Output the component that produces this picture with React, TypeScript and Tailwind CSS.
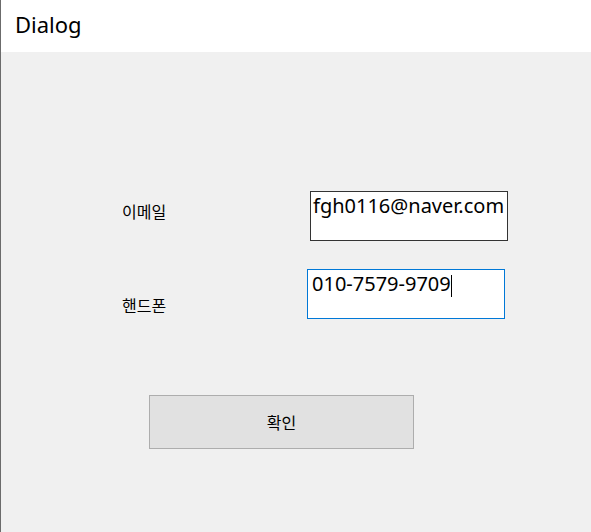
export default function App() {
  const latin = { fontFamily: '"Noto Sans", "Noto Sans CJK KR", sans-serif' };
  const kr = { fontFamily: '"Noto Sans CJK KR", sans-serif' };
  return (
    <div
      className="w-[591px] h-[532px] flex flex-col border-l border-[#6b6b6b] bg-[#f0f0f0] overflow-hidden"
      style={latin}
    >
      <div className="h-[52px] shrink-0 bg-white flex items-center pl-[14px] text-[22px] text-black leading-none pb-[4px]">
        Dialog
      </div>
      <div className="flex-1 flex flex-col">
        <div className="mt-[139px] h-[50px] flex items-start">
          <div
            className="w-[309px] pl-[121px] pt-[10px] text-[16px] leading-[20px] text-black"
            style={kr}
          >
            이메일
          </div>
          <div className="w-[198px] h-[50px] border border-[#333333] bg-white pl-[2px] pt-[2px] text-[20px] leading-[24px] text-black whitespace-nowrap overflow-hidden">
            fgh0116@naver.com
          </div>
        </div>
        <div className="mt-[28px] h-[50px] flex items-start">
          <div
            className="w-[306px] pl-[121px] pt-[26px] text-[16px] leading-[20px] text-black"
            style={kr}
          >
            핸드폰
          </div>
          <div className="w-[198px] h-[50px] border border-[#0078d7] bg-white pl-[4px] pt-[2px] text-[20px] leading-[24px] text-black whitespace-nowrap overflow-hidden flex items-start">
            <span>010-7579-9709</span>
            <span className="inline-block w-px h-[22px] bg-black mt-[3px]" />
          </div>
        </div>
        <div className="mt-[76px] ml-[148px]">
          <button
            className="w-[265px] h-[54px] border border-[#adadad] bg-[#e1e1e1] text-[16px] text-black flex items-center justify-center"
            style={kr}
          >
            확인
          </button>
        </div>
      </div>
    </div>
  );
}
